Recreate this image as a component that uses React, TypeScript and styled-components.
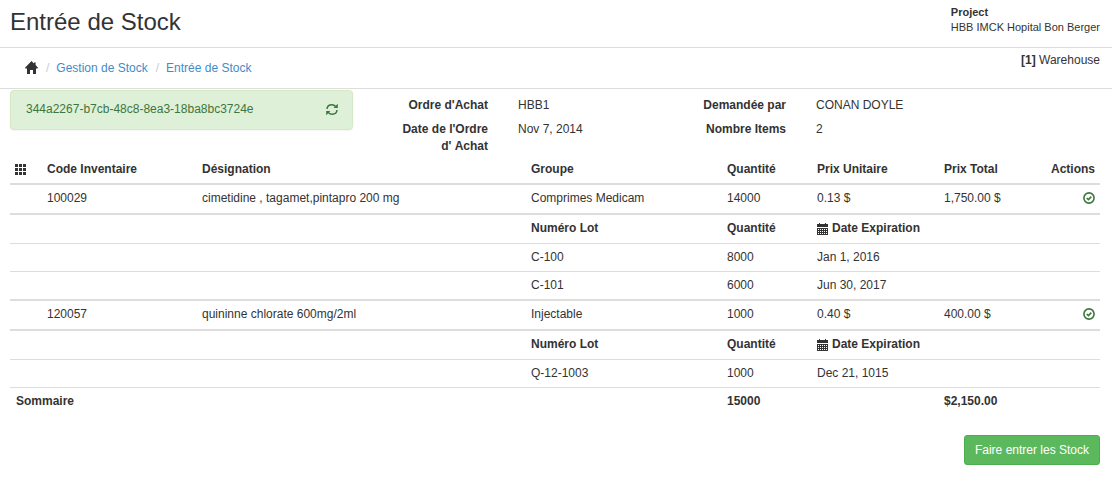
import React from "react";
import styled, { createGlobalStyle } from "styled-components";

const GlobalStyle = createGlobalStyle`
  *, *::before, *::after { box-sizing: border-box; }
  body {
    margin: 0;
    background: #fff;
    color: #333;
    font-family: "Liberation Sans", Arial, sans-serif;
    font-size: 12px;
    line-height: 17px;
  }
`;

const TitleBar = styled.header`
  display: flex;
  justify-content: space-between;
  padding: 5px 12px 11px 10px;
  border-bottom: 1px solid #ddd;
`;

const Title = styled.h1`
  margin: 3px 0 0;
  font-size: 24px;
  line-height: 28px;
  font-weight: 400;
`;

const Project = styled.div`
  display: flex;
  flex-direction: column;
  font-size: 11px;
  line-height: 15px;
`;

const SubBar = styled.div`
  display: flex;
  justify-content: space-between;
  padding: 4px 12px 11px 25px;
  border-bottom: 1px solid #ddd;
`;

const Crumbs = styled.ol`
  display: flex;
  align-items: center;
  margin: 8px 0 0;
  padding: 0;
  list-style: none;
`;

const Crumb = styled.li`
  display: flex;
  align-items: center;

  & + &::before {
    content: "/";
    padding: 0 7px 0 8px;
    color: #ccc;
  }
`;

const CrumbLink = styled.a<{ $home?: boolean }>`
  display: flex;
  padding-bottom: ${(p) => (p.$home ? 2 : 0)}px;
  color: ${(p) => (p.$home ? "#333" : "#428bca")};
  text-decoration: none;
`;

const Content = styled.main`
  padding: 1px 12px 16px 10px;
`;

const Summary = styled.section`
  display: grid;
  grid-template-columns: 343fr 259fr 428fr;
  column-gap: 30px;
  align-items: start;
`;

const Reference = styled.div`
  display: flex;
  align-items: center;
  justify-content: space-between;
  height: 40px;
  padding: 0 14px 2px 15px;
  border: 1px solid #d6e9c6;
  border-radius: 4px;
  background: #dff0d8;
  color: #3c763d;
  box-shadow: 0 1px 2px rgba(0, 0, 0, 0.05);
`;

const IconButton = styled.button`
  display: inline-flex;
  align-items: center;
  height: 16px;
  padding: 0;
  border: 0;
  background: none;
  color: #3c763d;
  vertical-align: top;
  cursor: pointer;
`;

const Details = styled.dl<{ $label: number }>`
  display: grid;
  grid-template-columns: ${(p) => p.$label}px 1fr;
  gap: 7px 30px;
  margin: 7px 0 0;
`;

const Term = styled.dt`
  font-weight: 700;
  text-align: right;
`;

const Value = styled.dd`
  margin: 0;
`;

const Table = styled.table`
  width: 100%;
  table-layout: fixed;
  border-collapse: separate;
  border-spacing: 0;
`;

const Col = styled.col<{ $w?: number }>`
  width: ${(p) => (p.$w ? `${p.$w}px` : "auto")};
`;

const Row = styled.tr<{ $rule?: number }>`
  & > * {
    padding: 5px 5px ${(p) => (p.$rule === 2 ? 6 : 5)}px;
    border-top: ${(p) => p.$rule ?? 0}px solid #ddd;
    text-align: left;
    vertical-align: top;
  }

  & > th:first-child[scope="row"] {
    padding-left: 6px;
  }
`;

const HeadRow = styled(Row)`
  & > * {
    padding-top: 6px;
  }
`;

const ActionHead = styled.th`
  && { text-align: right; }
`;

const ActionCell = styled.td`
  && { text-align: right; }
`;

const WithIcon = styled.span`
  display: flex;
  align-items: center;
  gap: 4px;
`;

const Inline = styled.svg`
  display: block;
`;

const GridMark = styled.span`
  display: flex;
  align-items: center;
  height: 17px;
`;

const Footer = styled.div`
  display: flex;
  justify-content: flex-end;
  margin-top: 20px;
`;

const SubmitButton = styled.button`
  height: 30px;
  padding: 0 10px;
  border: 1px solid #4cae4c;
  border-radius: 3px;
  background: #5cb85c;
  color: #fff;
  font: 12px/18px "Liberation Sans", Arial, sans-serif;
  cursor: pointer;
`;

const HomeIcon = () => (
  <Inline width="13" height="13" viewBox="0 0 13 13" fill="#333" aria-hidden="true">
    <path d="M6.500 0 9 2.500V1.600h1.600v2.500L13 6.700l-.4.800H11V13H8V9H5V13H2V7.500H.4L0 6.700z" />
  </Inline>
);

const RefreshIcon = () => (
  <Inline width="12" height="13" viewBox="0 0 12 13" fill="none" aria-hidden="true">
    <path d="M1 6C1.200 3.300 3.400 1.800 5.800 1.800 7.500 1.800 8.700 2.400 9.700 3.600M11 7C10.800 9.700 8.600 11.200 6.200 11.200 4.500 11.200 3.300 10.600 2.300 9.400" stroke="currentColor" strokeWidth="1.500" />
    <path d="M11.800.8V5H7.600zM.2 12.200V8H4.400z" fill="currentColor" />
  </Inline>
);

const GridIcon = () => (
  <Inline width="11" height="11" viewBox="0 0 11 11" fill="#333" aria-hidden="true">
    {[0, 4, 8].map((y) =>
      [0, 4, 8].map((x) => <rect key={`${x}-${y}`} x={x} y={y} width="3" height="3" />)
    )}
  </Inline>
);

const CalendarIcon = () => (
  <Inline width="11" height="12" viewBox="0 0 11 12" fill="#333" aria-hidden="true">
    <path d="M2 0h1v1h5V0h1v1h2v3H0V1h2zM0 5h11v7H0z" />
    <path d="M1 6h1v1H1zM3 6h1v1H3zM5 6h1v1H5zM7 6h1v1H7zM9 6h1v1H9zM1 8h1v1H1zM3 8h1v1H3zM5 8h1v1H5zM7 8h1v1H7zM9 8h1v1H9zM1 10h1v1H1zM3 10h1v1H3zM5 10h1v1H5zM7 10h1v1H7zM9 10h1v1H9z" fill="#fff" />
  </Inline>
);

const OkIcon = () => (
  <Inline width="12" height="12" viewBox="0 0 12 12" fill="none" stroke="currentColor" aria-hidden="true">
    <circle cx="6" cy="6" r="5.100" strokeWidth="1.600" />
    <path d="M3.700 6 5.400 7.600 8.300 4.600" strokeWidth="1.600" />
  </Inline>
);

const items = [
  {
    code: "100029",
    name: "cimetidine , tagamet,pintapro 200 mg",
    group: "Comprimes Medicam",
    quantity: "14000",
    unit: "0.13 $",
    total: "1,750.00 $",
    lots: [
      { lot: "C-100", quantity: "8000", expires: "Jan 1, 2016" },
      { lot: "C-101", quantity: "6000", expires: "Jun 30, 2017" },
    ],
  },
  {
    code: "120057",
    name: "quininne chlorate 600mg/2ml",
    group: "Injectable",
    quantity: "1000",
    unit: "0.40 $",
    total: "400.00 $",
    lots: [{ lot: "Q-12-1003", quantity: "1000", expires: "Dec 21, 1015" }],
  },
];

export default function App() {
  return (
    <>
      <GlobalStyle />
      <TitleBar>
        <Title>Entrée de Stock</Title>
        <Project>
          <strong>Project</strong>
          <span>HBB IMCK Hopital Bon Berger</span>
        </Project>
      </TitleBar>
      <SubBar>
        <nav>
          <Crumbs>
            <Crumb>
              <CrumbLink href="#" $home aria-label="Accueil"><HomeIcon /></CrumbLink>
            </Crumb>
            <Crumb><CrumbLink href="#stock">Gestion de Stock</CrumbLink></Crumb>
            <Crumb><CrumbLink href="#entry">Entrée de Stock</CrumbLink></Crumb>
          </Crumbs>
        </nav>
        <div><strong>[1]</strong> Warehouse</div>
      </SubBar>
      <Content>
        <Summary>
          <Reference>
            <span>344a2267-b7cb-48c8-8ea3-18ba8bc3724e</span>
            <IconButton type="button" aria-label="Actualiser"><RefreshIcon /></IconButton>
          </Reference>
          <Details $label={105}>
            <Term>Ordre d'Achat</Term>
            <Value>HBB1</Value>
            <Term>{"Date de l'Ordre d'\u00a0Achat"}</Term>
            <Value>Nov 7, 2014</Value>
          </Details>
          <Details $label={114}>
            <Term>Demandée par</Term>
            <Value>CONAN DOYLE</Value>
            <Term>Nombre Items</Term>
            <Value>2</Value>
          </Details>
        </Summary>
        <Table>
          <colgroup>
            <Col $w={32} />
            <Col $w={155} />
            <Col />
            <Col $w={196} />
            <Col $w={90} />
            <Col $w={127} />
            <Col $w={80} />
            <Col $w={81} />
          </colgroup>
          <thead>
            <HeadRow>
              <th aria-label="Articles"><GridMark><GridIcon /></GridMark></th>
              <th>Code Inventaire</th>
              <th>Désignation</th>
              <th>Groupe</th>
              <th>Quantité</th>
              <th>Prix Unitaire</th>
              <th>Prix Total</th>
              <ActionHead>Actions</ActionHead>
            </HeadRow>
          </thead>
          {items.map((item) => (
            <tbody key={item.code}>
              <Row $rule={2}>
                <td />
                <td>{item.code}</td>
                <td>{item.name}</td>
                <td>{item.group}</td>
                <td>{item.quantity}</td>
                <td>{item.unit}</td>
                <td>{item.total}</td>
                <ActionCell>
                  <IconButton type="button" aria-label="Valider"><OkIcon /></IconButton>
                </ActionCell>
              </Row>
              <Row $rule={2}>
                <td colSpan={3} />
                <th>Numéro Lot</th>
                <th>Quantité</th>
                <th colSpan={3}><WithIcon><CalendarIcon />Date Expiration</WithIcon></th>
              </Row>
              {item.lots.map((lot) => (
                <Row $rule={1} key={lot.lot}>
                  <td colSpan={3} />
                  <td>{lot.lot}</td>
                  <td>{lot.quantity}</td>
                  <td colSpan={3}>{lot.expires}</td>
                </Row>
              ))}
            </tbody>
          ))}
          <tfoot>
            <Row $rule={1}>
              <th scope="row" colSpan={4}>Sommaire</th>
              <th colSpan={2}>15000</th>
              <th colSpan={2}>$2,150.00</th>
            </Row>
          </tfoot>
        </Table>
        <Footer>
          <SubmitButton type="button">Faire entrer les Stock</SubmitButton>
        </Footer>
      </Content>
    </>
  );
}
